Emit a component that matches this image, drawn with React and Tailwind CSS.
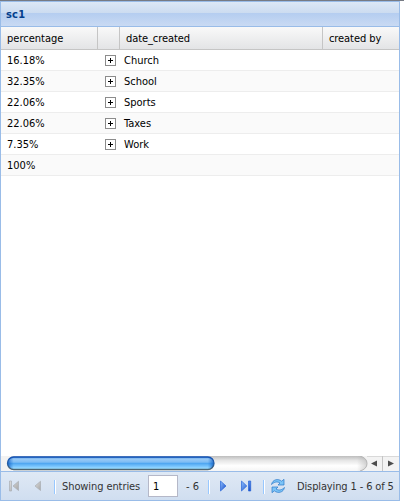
import React from 'react';

const rows = [
  ['16.18%', 'Church'],
  ['32.35%', 'School'],
  ['22.06%', 'Sports'],
  ['22.06%', 'Taxes'],
  ['7.35%', 'Work'],
  ['100%', ''],
];

function Expander() {
  return (
    <svg width="11" height="11" viewBox="0 0 11 11" shapeRendering="crispEdges">
      <rect x=".5" y=".5" width="10" height="10" fill="#fff" stroke="#8c8c8c" />
      <path d="M3 5.5h5M5.5 3v5" stroke="#000" />
    </svg>
  );
}

function Separator() {
  return <div className="mt-px h-3.5 w-0.5 shrink-0 border-l border-[#98c8ff] bg-white" />;
}

function Grid() {
  return (
    <div className="flex-1">
      <div className="flex h-[23px] border-b border-[#c5c5c5] bg-linear-to-b from-[#f9f9f9] to-[#e3e4e6] leading-6">
        <div className="w-[97px] border-r border-[#c5c5c5] pl-1.5">percentage</div>
        <div className="w-[22px] border-r border-[#c5c5c5]" />
        <div className="w-[203px] border-r border-[#c5c5c5] pl-1.5 tracking-[-0.08px]">date_created</div>
        <div className="pl-1.5 tracking-[-0.08px]">created by</div>
      </div>
      {rows.map(([pct, name], i) => (
        <div key={i} className={`flex h-[21px] items-center border-b border-[#ededed] leading-[18px] ${i % 2 ? 'bg-[#fafafa]' : 'bg-white'}`}>
          <div className="w-[104px] pt-0.5 pl-1.5">{pct}</div>
          <div className="w-[19px]">{name && <Expander />}</div>
          <div className="pt-0.5">{name}</div>
        </div>
      ))}
    </div>
  );
}

function Scrollbar() {
  return (
    <svg width="398" height="15" viewBox="0 0 398 15" className="block shrink-0">
      <defs>
        <linearGradient id="track" x2="0" y2="1">
          <stop offset="0" stopColor="#bdbdbd" />
          <stop offset=".3" stopColor="#e6e6e6" />
          <stop offset=".65" stopColor="#fff" />
          <stop offset="1" stopColor="#f5f5f5" />
        </linearGradient>
        <linearGradient id="thumb" x2="0" y2="1">
          <stop offset="0" stopColor="#2f7ed8" />
          <stop offset=".15" stopColor="#9bcbf6" />
          <stop offset=".42" stopColor="#7dbcf4" />
          <stop offset=".5" stopColor="#4da5f0" />
          <stop offset=".8" stopColor="#83cbff" />
          <stop offset="1" stopColor="#a5e8ff" />
        </linearGradient>
        <linearGradient id="rim" x2="0" y2="1">
          <stop offset="0" stopColor="#1454b8" />
          <stop offset=".6" stopColor="#285f9f" />
          <stop offset="1" stopColor="#4d6470" />
        </linearGradient>
        <linearGradient id="cap">
          <stop offset="0" stopColor="#0b55bd" stopOpacity=".8" />
          <stop offset=".03" stopColor="#1b70d0" stopOpacity="0" />
          <stop offset=".97" stopColor="#1b70d0" stopOpacity="0" />
          <stop offset="1" stopColor="#0b55bd" stopOpacity=".8" />
        </linearGradient>
        <linearGradient id="trackEnd">
          <stop offset="0" stopColor="#aaa" stopOpacity="0" />
          <stop offset="1" stopColor="#aaa" stopOpacity=".5" />
        </linearGradient>
      </defs>
      <rect width="398" height="15" fill="url(#track)" />
      <path d="M0 0h12Q6 2 6 7.5T12 15H0Z" fill="#f2f2f2" />
      <rect x="6.5" y="1" width="206.5" height="12.5" rx="6.25" fill="url(#thumb)" />
      <rect x="6.5" y="1" width="206.5" height="12.5" rx="6.25" fill="url(#cap)" stroke="url(#rim)" strokeWidth="1.3" />
      <rect x="356" width="10" height="15" fill="url(#trackEnd)" />
      <path d="M359 0q7 2 7 7.5T359 15h39V0Z" fill="#f3f3f3" />
      <path d="M359 0q7 2 7 7.5T359 15" fill="none" stroke="#b5b5b5" />
      <path d="M366 .5h32" stroke="#d9d9d9" />
      <path d="M381.5 0v15" stroke="#c5c5c5" />
      <path d="M376 4.5v6l-6-3zM387 4.5v6l6-3z" fill="#4d4d4d" />
    </svg>
  );
}

function PageArrow({ kind }) {
  const disabled = kind === 'first' || kind === 'prev';
  const id = `arrow-${kind}`;
  return (
    <svg width="12" height="14" viewBox="0 0 12 14" className="shrink-0">
      <defs>
        <linearGradient id={id} x2="1" y2="1">
          <stop offset="0" stopColor={disabled ? '#dedede' : '#8fc0ff'} />
          <stop offset="1" stopColor={disabled ? '#a5a5a5' : '#1549c5'} />
        </linearGradient>
      </defs>
      <g fill={`url(#${id})`} stroke={disabled ? '#a9adb3' : '#2865d8'} strokeWidth=".7">
        {kind === 'first' && <path d="M1.5 2h2v10h-2zM10.5 2.3v9.2L5 7z" />}
        {kind === 'prev' && <path d="M7.5 2.3v9.2L2 7z" />}
        {kind === 'next' && <path d="M2.5 2v10L8 7z" />}
        {kind === 'last' && <path d="M1.5 2v10L6.8 7zM8.5 2h2.2v10H8.5z" />}
      </g>
    </svg>
  );
}

function Refresh() {
  return (
    <svg width="16" height="16" viewBox="0 0 16 16" className="shrink-0">
      <g stroke="#2c78c8" strokeWidth=".7" fill="#7cc4f7" strokeLinejoin="round">
        <path d="M1.5 6.5C2.5 1.5 8 .2 11.7 3.2L14 1.3V7H8L10 5C7 3 4 4.2 1.5 6.5Z" />
        <path d="M14.5 9.5C13.5 14.5 8 15.8 4.3 12.8L2 14.7V9H8L6 11C9 13 12 11.8 14.5 9.5Z" />
      </g>
    </svg>
  );
}

function Pager() {
  return (
    <div className="flex h-[29px] shrink-0 items-center border-t border-[#99bce8] bg-linear-to-b from-[#dfe9f5] to-[#d0def0] leading-[18px] text-[#333]">
      <div className="w-[24px] pl-[7px]"><PageArrow kind="first" /></div>
      <div className="w-[29px] pl-2"><PageArrow kind="prev" /></div>
      <Separator />
      <div className="w-[92px] whitespace-nowrap pt-0.5 pl-1.5 tracking-[-0.09px]">Showing entries</div>
      <input defaultValue="1" className="h-[22px] w-[30px] border border-[#b5b8c8] bg-white pl-1 text-black outline-none" />
      <div className="w-[30px] whitespace-nowrap pt-0.5 pl-2">- 6</div>
      <Separator />
      <div className="w-[22px] pl-2"><PageArrow kind="next" /></div>
      <div className="w-[31px] pl-2"><PageArrow kind="last" /></div>
      <Separator />
      <div className="w-[32px] pl-[5px]"><Refresh /></div>
      <div className="whitespace-nowrap pt-0.5 tracking-[-0.13px]">Displaying 1 - 6 of 5</div>
    </div>
  );
}

export default function App() {
  return (
    <div className="h-[502px] w-[404px] overflow-hidden bg-white font-['DejaVu_Sans_Condensed','DejaVu_Sans',sans-serif] text-[11px] text-black">
      <div className="h-px bg-[#777b84]" />
      <div className="flex h-[500px] w-[400px] flex-col border border-[#99bce8]">
        <div className="h-[25px] shrink-0 border-b border-[#99bce8] bg-[linear-gradient(#dce8f6,#ccdcf0_45%,#b4cdf0_46%,#c9daf3)] pl-[5px] leading-[26px] font-bold tracking-[0.2px] text-[#04408c]">sc1</div>
        <Grid />
        <Scrollbar />
        <Pager />
      </div>
    </div>
  );
}
